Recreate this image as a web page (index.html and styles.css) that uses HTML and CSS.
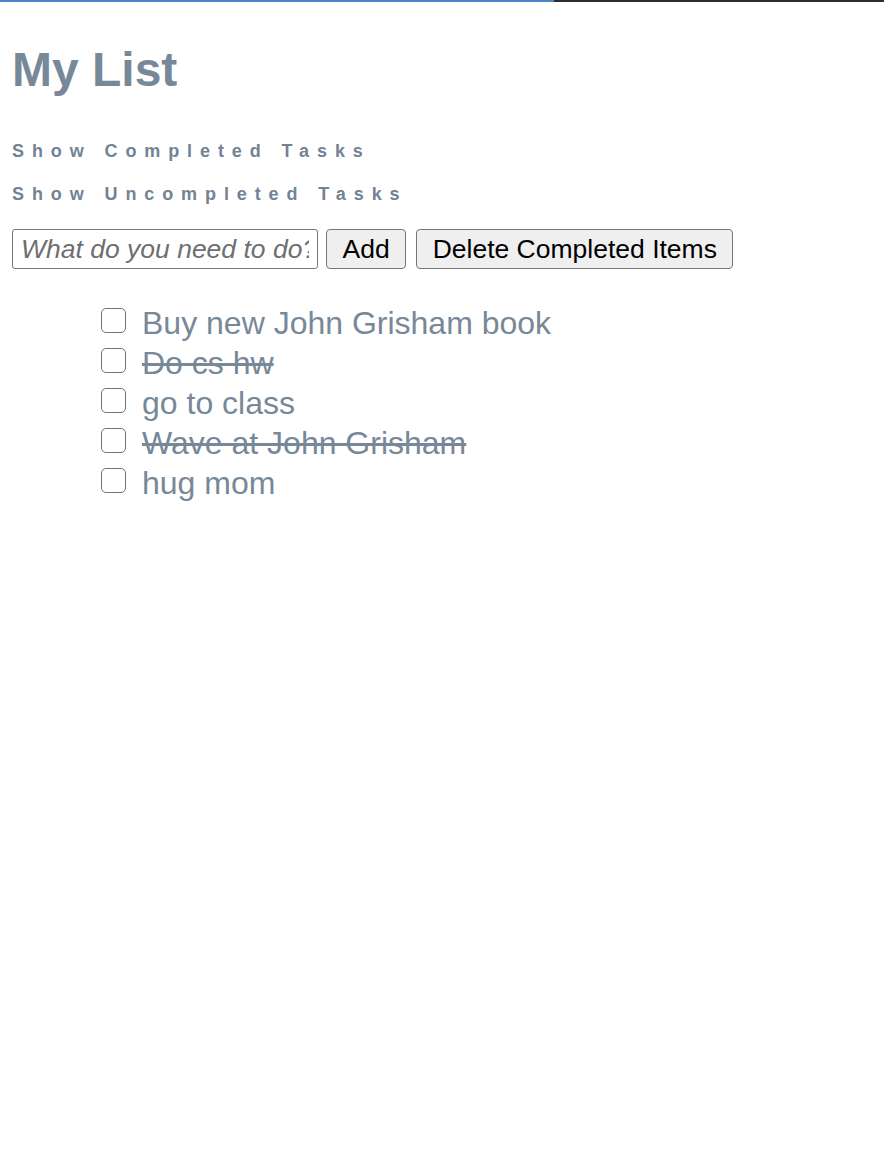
FILE: index.html
```html
<!DOCTYPE html>
<html lang="en">
<head>
<meta charset="utf-8">
<title>My List</title>
<link rel="stylesheet" href="styles.css">
</head>
<body>
<div class="topbar"><div class="progress"></div><div class="rest"></div></div>
<main class="container">
  <h1 class="title">My List</h1>
  <div class="filters">
    <h6 class="filter">Show Completed Tasks</h6>
    <h6 class="filter filter-second">Show Uncompleted Tasks</h6>
  </div>
  <form class="add-form">
    <input class="task-input" type="text" placeholder="What do you need to do?">
    <button class="btn btn-add" type="button">Add</button>
    <button class="btn" type="button">Delete Completed Items</button>
  </form>
  <ul class="task-list">
    <li class="task"><input class="check" type="checkbox"><span class="label">Buy new John Grisham book</span></li>
    <li class="task done"><input class="check" type="checkbox"><span class="label">Do cs hw</span></li>
    <li class="task"><input class="check" type="checkbox"><span class="label">go to class</span></li>
    <li class="task done"><input class="check" type="checkbox"><span class="label">Wave at John Grisham</span></li>
    <li class="task"><input class="check" type="checkbox"><span class="label">hug mom</span></li>
  </ul>
</main>
</body>
</html>
```

FILE: styles.css
```css
html, body {
  margin: 0;
  padding: 0;
  background: #ffffff;
}

body {
  font-family: "Liberation Sans", Arial, Helvetica, sans-serif;
  color: #778899;
}

.topbar {
  display: flex;
  height: 2px;
}

.progress {
  width: 554px;
  background: #4a87c8;
}

.rest {
  flex: 1;
  background: #2d2d2d;
}

.container {
  padding: 0 12px;
}

.title {
  margin: 40px 0 0;
  font-size: 48px;
  line-height: 56px;
  font-weight: bold;
  color: #778899;
}

.filters {
  margin-top: 43px;
}

.filter {
  margin: 0;
  font-size: 18px;
  line-height: 20px;
  font-weight: bold;
  letter-spacing: 7.9px;
  color: #728396;
}

.filter-second {
  margin-top: 23px;
}

.add-form {
  display: flex;
  align-items: center;
  margin: 25px 0 0;
  height: 40px;
}

.task-input {
  box-sizing: border-box;
  width: 306px;
  height: 40px;
  margin: 0 8px 0 0;
  padding: 0 8px;
  border: 1px solid #767676;
  border-radius: 3px;
  font-family: "Liberation Sans", Arial, Helvetica, sans-serif;
  font-size: 26.5px;
  color: #000;
  background: #fff;
}

.task-input::placeholder {
  font-style: italic;
  color: #6f6f6f;
}

.btn {
  box-sizing: border-box;
  height: 40px;
  margin: 0;
  padding: 0 15.5px;
  border: 1px solid #767676;
  border-radius: 4px;
  background: #efefef;
  color: #000;
  font-family: "Liberation Sans", Arial, Helvetica, sans-serif;
  font-size: 26.5px;
}

.btn-add {
  margin-right: 10px;
}

.task-list {
  list-style: none;
  margin: 34px 0 0;
  padding: 0 0 0 89px;
}

.task {
  display: flex;
  align-items: flex-start;
  height: 40px;
  font-size: 32px;
  line-height: 40px;
}

.check {
  appearance: none;
  -webkit-appearance: none;
  box-sizing: border-box;
  width: 25px;
  height: 25px;
  margin: 5px 16px 0 0;
  border: 1.5px solid #737373;
  border-radius: 5px;
  background: #fff;
  flex: none;
}

.done .label {
  text-decoration: line-through;
}
```
